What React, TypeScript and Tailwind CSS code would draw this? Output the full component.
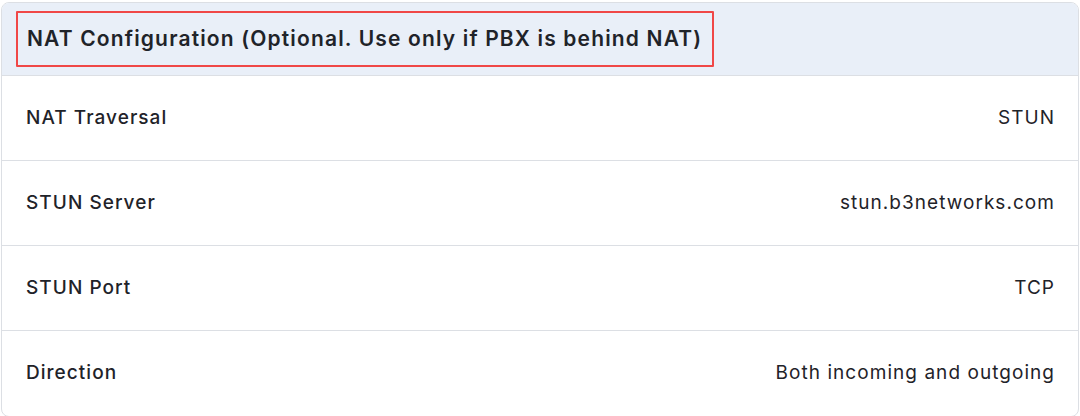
const rows = [
  { label: 'NAT Traversal', value: 'STUN' },
  { label: 'STUN Server', value: 'stun.b3networks.com' },
  { label: 'STUN Port', value: 'TCP' },
  { label: 'Direction', value: 'Both incoming and outgoing' },
];

export default function App() {
  return (
    <div className="w-[1080px] h-[416px] bg-white pt-[2px] px-[1px] font-['Inter',sans-serif] text-[#1f2329]">
      <div className="border border-[#dcdfe4] rounded-[8px] overflow-hidden">
        <div className="h-[73px] bg-[#e9eff8] border-b border-[#dcdfe4] flex items-center pl-[14px]">
          <div className="h-[56px] border-2 border-[#f04747] flex items-center pl-[9px] pr-[10px] rounded-[1px]">
            <h2 className="text-[21px] font-semibold tracking-[0.055em]">
              NAT Configuration (Optional. Use only if PBX is behind NAT)
            </h2>
          </div>
        </div>
        {rows.map((row, i) => (
          <div
            key={row.label}
            className={`h-[85px] flex items-center justify-between pl-[24px] pr-[23px] ${
              i < rows.length - 1 ? 'border-b border-[#dcdfe4]' : ''
            }`}
          >
            <span className="text-[19px] font-medium tracking-[0.055em]">{row.label}</span>
            <span className="text-[19px] tracking-[0.055em]">{row.value}</span>
          </div>
        ))}
      </div>
    </div>
  );
}
